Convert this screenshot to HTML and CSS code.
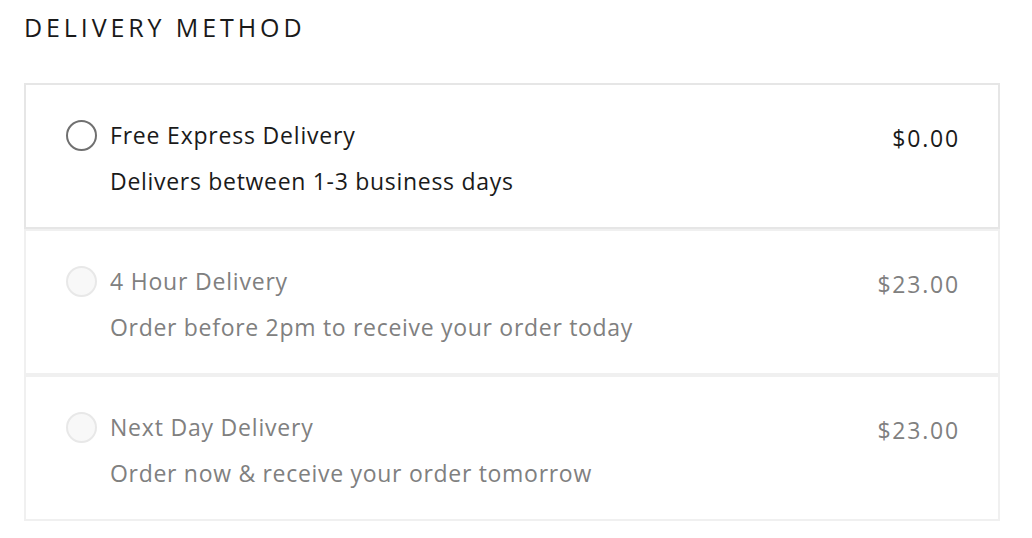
FILE: index.html
```html
<!DOCTYPE html>
<html lang="en">
<head>
<meta charset="utf-8">
<title>Delivery Method</title>
<link rel="stylesheet" href="styles.css">
</head>
<body>
<section class="delivery">
  <h2 class="delivery-title">DELIVERY METHOD</h2>
  <div class="options">
    <label class="option">
      <span class="radio"></span>
      <span class="option-text">
        <span class="option-name">Free Express Delivery</span>
        <span class="option-desc">Delivers between 1-3 business days</span>
      </span>
      <span class="option-price">$0.00</span>
    </label>
    <label class="option is-disabled">
      <span class="radio"></span>
      <span class="option-text">
        <span class="option-name">4 Hour Delivery</span>
        <span class="option-desc">Order before 2pm to receive your order today</span>
      </span>
      <span class="option-price">$23.00</span>
    </label>
    <label class="option is-disabled">
      <span class="radio"></span>
      <span class="option-text">
        <span class="option-name">Next Day Delivery</span>
        <span class="option-desc">Order now &amp; receive your order tomorrow</span>
      </span>
      <span class="option-price">$23.00</span>
    </label>
  </div>
</section>
</body>
</html>
```

FILE: styles.css
```css
html, body {
  margin: 0;
  padding: 0;
  background: #ffffff;
}

body {
  font-family: "Open Sans", "Lato", sans-serif;
  color: #1a1a1a;
}

.delivery {
  padding: 12px 32px 0 24px;
}

.delivery-title {
  margin: 0;
  font-size: 25px;
  font-weight: 400;
  letter-spacing: 3.9px;
  line-height: 30px;
  color: #1a1a1a;
}

.options {
  margin-top: 41px;
  display: flex;
  flex-direction: column;
}

.option {
  display: flex;
  align-items: flex-start;
  border: 2px solid #e6e6e6;
  padding: 37px 38px 33px 40px;
  height: 72px;
}

.option.is-disabled {
  border-color: #f0f0f0;
}

.radio {
  flex: none;
  width: 27px;
  height: 27px;
  border: 2px solid #707070;
  border-radius: 50%;
  margin-top: -2px;
  margin-right: 13px;
  background: #fff;
}

.is-disabled .radio {
  border-color: #e8e8e8;
  background: #f8f8f8;
}

.option-text {
  flex: 1;
  display: flex;
  flex-direction: column;
  gap: 20px;
}

.option-name,
.option-desc,
.option-price {
  font-size: 23px;
  line-height: 26px;
}

.option-name {
  letter-spacing: 0.8px;
}

.option-desc {
  letter-spacing: 0.7px;
}

.option-price {
  margin-top: 3px;
  letter-spacing: 1.8px;
}

.is-disabled .option-name,
.is-disabled .option-desc,
.is-disabled .option-price {
  color: #808080;
}
```
